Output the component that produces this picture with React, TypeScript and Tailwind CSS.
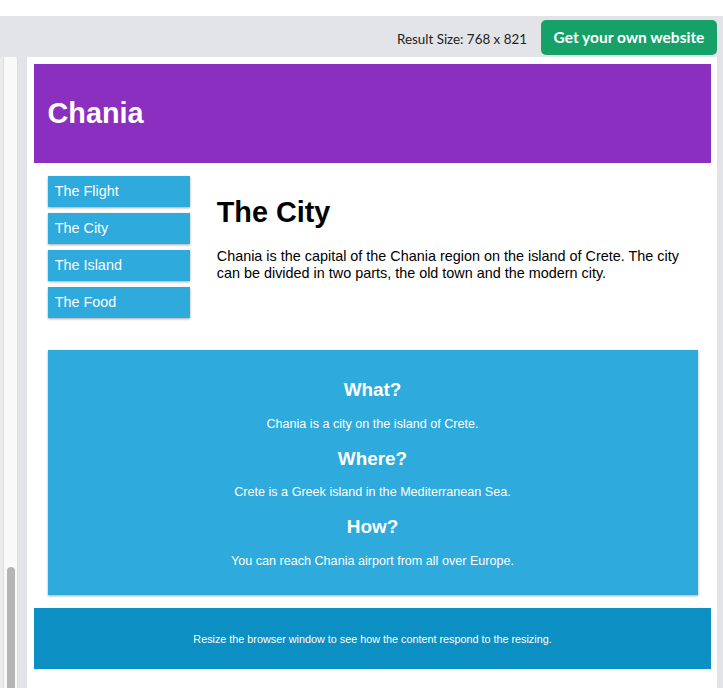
const menuItems = ['The Flight', 'The City', 'The Island', 'The Food'];

const asideItems = [
  { title: 'What?', text: 'Chania is a city on the island of Crete.' },
  { title: 'Where?', text: 'Crete is a Greek island in the Mediterranean Sea.' },
  { title: 'How?', text: 'You can reach Chania airport from all over Europe.' },
];

const cardShadow =
  'shadow-[0_1px_3px_rgba(0,0,0,0.12),0_1px_2px_rgba(0,0,0,0.24)]';

function TopBar() {
  return (
    <div className="flex h-[41px] items-center justify-end gap-[14px] pr-[6px] pt-[2px]">
      <span className="mt-[3px] font-['Lato',sans-serif] text-[13.4px] text-[#222]">
        Result Size: 768 x 821
      </span>
      <button className="h-[35px] w-[176px] rounded-[5px] bg-[#16a168] font-['Lato',sans-serif] text-[15.5px] font-bold text-white">
        Get your own website
      </button>
    </div>
  );
}

function CodeScroll() {
  return (
    <div className="flex w-[27px] shrink-0">
      <div className="w-[3px] bg-[#ebebeb]" />
      <div className="flex w-[15px] flex-col border-x border-[#dcdcdc] bg-[#f9f9f9] pt-[510px]">
        <div className="mx-auto h-[200px] w-[8px] rounded-full bg-[#b5b5b5]" />
      </div>
      <div className="w-[9px] bg-[#e3e4e8]" />
    </div>
  );
}

function Result() {
  return (
    <div className="w-[690px] shrink-0 bg-white pl-[7px] pr-[6px] pt-[7px] font-['Liberation_Sans',Arial,sans-serif]">
      <div className="bg-[#8b2fc1] p-[13.5px] text-white">
        <h1 className="my-[19.3px] text-[28.8px] font-bold leading-[33.5px]">Chania</h1>
      </div>

      <div className="flex">
        <div className="w-1/4 px-[13.5px] py-[13px]">
          <ul>
            {menuItems.map((item) => (
              <li
                key={item}
                className={`mb-[6px] bg-[#2eaadc] p-[7.2px] text-[14.4px] leading-[16.5px] text-white ${cardShadow}`}
              >
                {item}
              </li>
            ))}
          </ul>
        </div>
        <div className="w-3/4 p-[13.5px]">
          <h1 className="my-[19.3px] text-[28.8px] font-bold leading-[33px] text-black">
            The City
          </h1>
          <p className="my-[14.4px] text-[14.4px] leading-[16.5px] text-black">
            Chania is the capital of the Chania region on the island of Crete. The city
            can be divided in two parts, the old town and the modern city.
          </p>
        </div>
      </div>

      <div className="p-[13.5px]">
        <div className={`bg-[#2eaadc] p-[13.5px] text-center text-[12.6px] text-white ${cardShadow}`}>
          {asideItems.map((a) => (
            <div key={a.title}>
              <h2 className="my-[15.7px] text-[18.9px] font-bold leading-[22px]">{a.title}</h2>
              <p className="my-[12.6px] leading-[15px]">{a.text}</p>
            </div>
          ))}
        </div>
      </div>

      <div className="bg-[#0c8fc2] p-[13.5px] text-center text-[10.8px] text-white">
        <p className="my-[10.8px] leading-[12.4px]">
          Resize the browser window to see how the content respond to the resizing.
        </p>
      </div>
    </div>
  );
}

export default function App() {
  return (
    <div className="flex h-[688px] w-[723px] flex-col overflow-hidden bg-white">
      <div className="h-[16px] shrink-0 bg-white" />
      <div className="flex flex-1 flex-col bg-[#e3e4e8]">
        <TopBar />
        <div className="flex flex-1">
          <CodeScroll />
          <Result />
          <div className="flex-1 bg-[#e3e4e8]" />
        </div>
      </div>
    </div>
  );
}
